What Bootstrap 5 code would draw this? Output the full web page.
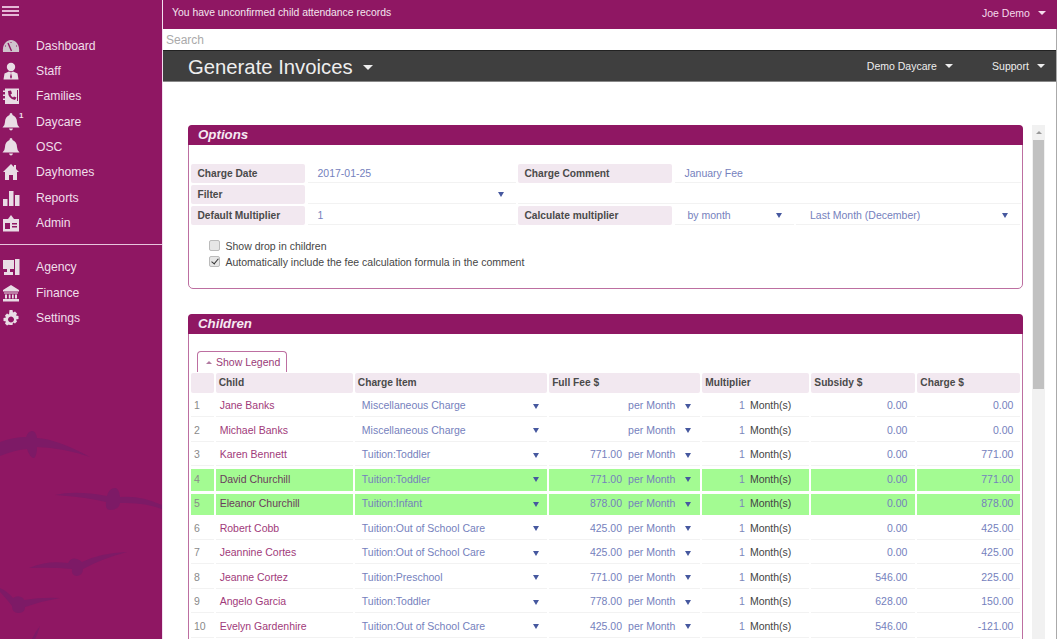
<!DOCTYPE html>
<html lang="en"><head><meta charset="utf-8"><title>Generate Invoices</title>
<link href="https://cdn.jsdelivr.net/npm/bootstrap@5.3.0/dist/css/bootstrap.min.css" rel="stylesheet">
<style>
html,body{height:639px;overflow:hidden;background:#fff;font-family:"Liberation Sans",Arial,sans-serif;font-size:10.5px;color:#444}
.shell{height:639px;width:1057px}
.side{width:163px;background:#8f1763;color:#f0dfea;flex:none;border-right:1px solid #f3dff0;position:relative;overflow:hidden}
.burger{height:29px;padding:6px 0 0 2px}
.burger i{display:block;width:17px;height:1.5px;background:#e5b8d6;margin-bottom:2.5px}
.navlist{padding-top:4px}
.navitem{height:25.35px;padding-left:2px;font-size:12.2px;position:relative}
.navitem svg{width:18px;height:18px;fill:#e9dde5;margin-right:16px;flex:none}
.sup{position:absolute;left:19px;top:1px;font-size:8px;font-weight:bold}
.sep{height:1px;background:#e8c5dd;margin:8.5px 0 9.5px}
.birds{position:absolute;left:0;bottom:0;width:162px;height:229px}
.wrap{flex:1;min-width:0;border-right:1px solid #aaa}
.topbar{height:29px;background:#8f1763;color:#f3e6ef;font-size:10.4px;padding:0 11px 0 9px;margin-right:-1px}
.noticetext{padding-top:5px}
.userlink{font-size:10.5px;padding-top:6px;color:#f5dcec}
.tri{display:inline-block;width:0;height:0;border-left:4px solid transparent;border-right:4px solid transparent;border-top:4px solid currentColor;vertical-align:2px}
.searchbar{height:21px;padding-left:3px;font-size:12px;color:#aaa;line-height:23px}
.titlebar{height:32px;background:#3f3f3f;border-top:1px solid #222;border-bottom:1px solid #888;color:#eee;padding:2px 11px 0 25px}
.pagetitle{font-size:20.3px;color:#eee;margin:0;font-weight:normal}
.pagetitle .tri{border-left-width:5px;border-right-width:5px;border-top-width:5px;margin-left:5px;vertical-align:4px}
.tlink{font-size:10.5px}
.gap9{margin-left:39px}
.scrollzone{flex:1;padding:43px 10px 0 25px;min-height:0;gap:9px}
.panels{width:835px;flex:none;gap:25px}
.pane{border:1px solid #bd6fa1;border-radius:5px;background:#fff;flex:none}
.panehead{height:20px;background:#8f1763;color:#f6e9f2;font-size:13.3px;font-weight:bold;font-style:italic;padding:0 10px;line-height:20px;border-radius:4px 4px 0 0;margin:-1px -1px 0}
.optbody{height:143px;padding:19px 2px 0}
.frow{height:21px;display:flex;gap:2.5px}
.lab{background:#f2e8f0;border-radius:2px;height:19px;line-height:19px;font-weight:bold;font-size:10.2px;color:#4a4a4a;padding-left:6.500px;flex:none}
.val{height:19px;line-height:19px;border-bottom:1px solid #f2f2f2;color:#7581bd;padding-left:10px;flex:none;position:relative}
.arr{position:absolute;top:7px;width:0;height:0;border-left:3px solid transparent;border-right:3px solid transparent;border-top:5px solid #46589f}
.w1{width:114px}.w2{width:208px}.w3{width:154px}.w4{width:346px}.w5{width:119px;padding-left:13px}.w6{width:224px;padding-left:14px}.w7{width:503px}
.checks{padding:12px 0 0 18px;color:#454545}
.chk{height:16px;gap:6px}
.chk input{appearance:none;width:10.5px;height:10.5px;margin:-3px 0 0;background:#e6e6e6;border:1px solid #bbb;border-radius:2px;position:relative}
.chk input:checked::after{content:"";position:absolute;left:3px;top:0;width:4px;height:7px;border:solid #333;border-width:0 1.5px 1.5px 0;transform:rotate(40deg)}
.kidsbody{padding:17px 2px 0;height:330px}
.legendtab{width:90px;height:21px;margin-left:6px;margin-bottom:1px;border:1px solid #bd6fa1;border-bottom:0;border-radius:4px 4px 0 0;color:#9a3a78;padding-left:8px;line-height:21px}
.legendtab .up{display:inline-block;width:0;height:0;border-left:3px solid transparent;border-right:3px solid transparent;border-bottom:3px solid #b27aa0;margin-right:4px;vertical-align:2px}
.kids{border-collapse:separate;border-spacing:2.4px 0;table-layout:fixed;width:833.4px;margin-left:-2px;color:#444}
.kids th{padding:0;border-bottom:2.5px solid #fff;height:22.5px}
.kids th div{height:20px;line-height:20px;padding:0 3px;background:#f2e8f0;border-radius:2px;font-weight:bold;font-size:10.2px;color:#4a4a4a}
.kids td{height:24.5px;padding:0 3px;border-bottom:3px solid #fff;box-shadow:inset 0 -1px 0 #f2f2f2;color:#7581bd;position:relative;vertical-align:middle;background:#fff}
.kids td.num{color:#8a8a8a}
.kids td.nm{color:#9f3a7a;padding-left:4px}
.kids td.itm{padding-left:7px}
.kids td.mult{color:#444;text-align:right;padding-right:18px}
.kids td.mult b{color:#7c86bb;font-weight:normal;margin-right:5px}
.kids td.amt{text-align:right;padding-right:7px}
.kids td.sub{padding-right:8px}
.kids td.fee{text-align:right;padding-right:25px}
.kids td.fee .per{margin-left:6px}
.kids tr.hit td{background:#a3fb92;box-shadow:none}
.kids tr.hit td.nm{color:#6b3a5c}
.kids .arr{top:8px}
.bar{width:13px;height:514px;background:#f1f1f1;flex:none;position:relative}
.bar i{display:block;width:11px;margin:0 1px;background:#c1c1c1;height:249px}
.barup{height:15px;display:flex;justify-content:center;padding-top:6px}
.barup u{display:block;width:0;height:0;border-left:3.5px solid transparent;border-right:3.5px solid transparent;border-bottom:3.5px solid #999}
</style></head><body>
<div class="shell d-flex">
<aside class="side d-flex flex-column">
<div class="burger"><i></i><i></i><i></i></div>
<div class="navlist">
<div class="navitem d-flex align-items-center"><svg viewBox="0 0 18 18"><path d="M1 15C0 8 4 3 9 3s9 5 8 12z" fill="#cfc3cc"/><path d="M9.500 14L6 6" stroke="#8f1763" stroke-width="1.400"/><path d="M3 9h1M14 9h1M9 5v1" stroke="#8f1763"/></svg>Dashboard</div>
<div class="navitem d-flex align-items-center"><svg viewBox="0 0 18 18"><circle cx="9" cy="5" r="4.200"/><path d="M1.500 17.500l1-6 4.500-2 2 1 2-1 4.500 2 1 6z"/><path d="M9 11l-1 4 1 2 1-2z" fill="#8f1763"/></svg>Staff</div>
<div class="navitem d-flex align-items-center"><svg viewBox="0 0 18 18"><path d="M3 1.500h14v15.500H3zM1 3.500h3v1.500H1zM1 7.500h3v1.500H1zM1 11.500h3v1.500H1z"/><path d="M6 4q0 8 7 9l1.500-2.500-2.500-1-1 1q-2-1-2.500-3l1.500-1-1-3zM15 3h1v11h-1z" fill="#8f1763"/></svg>Families</div>
<div class="navitem d-flex align-items-center"><svg viewBox="0 0 18 18"><path d="M9 0q1.500 0 1.500 2Q15 4 15 9q0 3 2.500 5.500H.5Q3 12 3 9q0-5 4.500-7Q7.500 0 9 0zM7 15.500h4q-.5 2-2 2t-2-2z"/></svg>Daycare<span class="sup">1</span></div>
<div class="navitem d-flex align-items-center"><svg viewBox="0 0 18 18"><path d="M9 0q1.500 0 1.500 2Q15 4 15 9q0 3 2.500 5.500H.5Q3 12 3 9q0-5 4.500-7Q7.500 0 9 0zM7 15.500h4q-.5 2-2 2t-2-2z"/></svg>OSC</div>
<div class="navitem d-flex align-items-center"><svg viewBox="0 0 18 18"><path d="M9 1L1 9h2v8h4v-5h4v5h4V9h2l-3-3V2h-2v2z"/></svg>Dayhomes</div>
<div class="navitem d-flex align-items-center"><svg viewBox="0 0 18 18"><path d="M1 10h4.500v7H1zM7 2h4.500v15H7zM13 6h4.500v11H13z"/></svg>Reports</div>
<div class="navitem d-flex align-items-center"><svg viewBox="0 0 18 18"><path d="M9 1l3 4h5v12.500H1V5h5z"/><path d="M3 9h5v6H3zM10 9h5v1.500h-5zM10 12h5v1.500h-5z" fill="#8f1763"/></svg>Admin</div>
</div>
<div class="sep"></div>
<div class="navitem d-flex align-items-center"><svg viewBox="0 0 18 18"><path d="M1 2h11v9H1zM13 1h4.500v16H13zM5 11h3v3h3v3H2v-3h3z"/></svg>Agency</div>
<div class="navitem d-flex align-items-center"><svg viewBox="0 0 18 18"><path d="M9 1l8 5v1.500H1V6zM2 8.500h14v1H2zM3 10.500h2v4H3zM6.800 10.500h1.700v4H6.800zM10 10.500h1.700v4H10zM13 10.500h2v4h-2zM1 15h16v2.500H1z"/></svg>Finance</div>
<div class="navitem d-flex align-items-center"><svg viewBox="0 0 18 18"><path fill-rule="evenodd" d="M7.500 1h3l.5 2.500 2-1 2 2-1 2 2.500.5v3l-2.500.5 1 2-2 2-2-1-.5 2.500h-3L7 15.500l-2 1-2-2 1-2L1.500 12V9L4 8.500 3 6.500l2-2 2 1zM9 7.500a3 3 0 1 0 .01 0z"/></svg>Settings</div>
<svg class="birds" viewBox="0 0 162 229" fill="#7d1a66"><path d="M0 32q14-5 26-5 2-6 6-6t5 7q20 1 53 19-26-9-53-10 0 9-3 11-4 0-7-9-12 1-27 7z"/><path d="M55 85q20-5 52 1 2-8 8-8 4 0 5 9 20-2 42 8v4q-18-7-42-6-1 7-10 7-5 0-4-8-20-5-51-7z"/><path d="M29 158q18-8 39-5 3-6 9-4 3 1 5 3 18-9 45-10-26 7-44 17 0 6-6 7-6 0-5-7-20-2-43-1z"/><path d="M0 178q7 3 13 10 4-3 8-1 3 1 3 3 18-3 36-2-18 3-35 9 0 6-7 6-6 0-6-7-7-9-12-14z"/><path d="M32 229q3-7 8-13-2 7-5 13z"/></svg>
</aside>
<div class="wrap d-flex flex-column">
<div class="topbar d-flex justify-content-between align-items-start"><span class="noticetext">You have unconfirmed child attendance records</span><span class="userlink">Joe Demo <span class="tri ms-2"></span></span></div>
<div class="searchbar">Search</div>
<div class="titlebar d-flex justify-content-between align-items-center">
<h1 class="pagetitle">Generate Invoices <span class="tri"></span></h1>
<div class="d-flex tlink"><span>Demo Daycare <span class="tri ms-2"></span></span><span class="gap9">Support <span class="tri ms-2"></span></span></div>
</div>
<div class="scrollzone d-flex">
<div class="panels d-flex flex-column">
<section class="card pane">
<div class="panehead">Options</div>
<div class="optbody">
<div class="frow"><div class="lab w1">Charge Date</div><div class="val w2">2017-01-25</div><div class="lab w3">Charge Comment</div><div class="val w4">January Fee</div></div>
<div class="frow"><div class="lab w1">Filter</div><div class="val w2"><span class="arr" style="left:190px"></span></div><div class="val w7"></div></div>
<div class="frow"><div class="lab w1">Default Multiplier</div><div class="val w2">1</div><div class="lab w3">Calculate multiplier</div><div class="val w5">by month<span class="arr" style="left:101px"></span></div><div class="val w6">Last Month (December)<span class="arr" style="left:206px"></span></div></div>
<div class="checks">
<div class="chk d-flex align-items-center"><input type="checkbox"><span>Show drop in children</span></div>
<div class="chk d-flex align-items-center"><input type="checkbox" checked><span>Automatically include the fee calculation formula in the comment</span></div>
</div>
</div>
</section>
<section class="card pane">
<div class="panehead">Children</div>
<div class="kidsbody">
<div class="legendtab"><span class="up"></span>Show Legend</div>
<table class="kids">
<colgroup><col style="width:22.6px"><col style="width:136.6px"><col style="width:191.6px"><col style="width:150.6px"><col style="width:106.6px"><col style="width:103.6px"><col style="width:102.6px"></colgroup>
<thead><tr><th><div></div></th><th><div>Child</div></th><th><div>Charge Item</div></th><th><div>Full Fee $</div></th><th><div>Multiplier</div></th><th><div>Subsidy $</div></th><th><div>Charge $</div></th></tr></thead>
<tbody>
<tr><td class="num">1</td><td class="nm">Jane Banks</td><td class="itm">Miscellaneous Charge<span class="arr" style="left:178.5px"></span></td><td class="fee"><span class="per">per Month</span><span class="arr" style="left:136px"></span></td><td class="mult"><b>1</b>Month(s)</td><td class="amt sub">0.00</td><td class="amt">0.00</td></tr>
<tr><td class="num">2</td><td class="nm">Michael Banks</td><td class="itm">Miscellaneous Charge<span class="arr" style="left:178.5px"></span></td><td class="fee"><span class="per">per Month</span><span class="arr" style="left:136px"></span></td><td class="mult"><b>1</b>Month(s)</td><td class="amt sub">0.00</td><td class="amt">0.00</td></tr>
<tr><td class="num">3</td><td class="nm">Karen Bennett</td><td class="itm">Tuition:Toddler<span class="arr" style="left:178.5px"></span></td><td class="fee">771.00<span class="per">per Month</span><span class="arr" style="left:136px"></span></td><td class="mult"><b>1</b>Month(s)</td><td class="amt sub">0.00</td><td class="amt">771.00</td></tr>
<tr class="hit"><td class="num">4</td><td class="nm">David Churchill</td><td class="itm">Tuition:Toddler<span class="arr" style="left:178.5px"></span></td><td class="fee">771.00<span class="per">per Month</span><span class="arr" style="left:136px"></span></td><td class="mult"><b>1</b>Month(s)</td><td class="amt sub">0.00</td><td class="amt">771.00</td></tr>
<tr class="hit"><td class="num">5</td><td class="nm">Eleanor Churchill</td><td class="itm">Tuition:Infant<span class="arr" style="left:178.5px"></span></td><td class="fee">878.00<span class="per">per Month</span><span class="arr" style="left:136px"></span></td><td class="mult"><b>1</b>Month(s)</td><td class="amt sub">0.00</td><td class="amt">878.00</td></tr>
<tr><td class="num">6</td><td class="nm">Robert Cobb</td><td class="itm">Tuition:Out of School Care<span class="arr" style="left:178.5px"></span></td><td class="fee">425.00<span class="per">per Month</span><span class="arr" style="left:136px"></span></td><td class="mult"><b>1</b>Month(s)</td><td class="amt sub">0.00</td><td class="amt">425.00</td></tr>
<tr><td class="num">7</td><td class="nm">Jeannine Cortes</td><td class="itm">Tuition:Out of School Care<span class="arr" style="left:178.5px"></span></td><td class="fee">425.00<span class="per">per Month</span><span class="arr" style="left:136px"></span></td><td class="mult"><b>1</b>Month(s)</td><td class="amt sub">0.00</td><td class="amt">425.00</td></tr>
<tr><td class="num">8</td><td class="nm">Jeanne Cortez</td><td class="itm">Tuition:Preschool<span class="arr" style="left:178.5px"></span></td><td class="fee">771.00<span class="per">per Month</span><span class="arr" style="left:136px"></span></td><td class="mult"><b>1</b>Month(s)</td><td class="amt sub">546.00</td><td class="amt">225.00</td></tr>
<tr><td class="num">9</td><td class="nm">Angelo Garcia</td><td class="itm">Tuition:Toddler<span class="arr" style="left:178.5px"></span></td><td class="fee">778.00<span class="per">per Month</span><span class="arr" style="left:136px"></span></td><td class="mult"><b>1</b>Month(s)</td><td class="amt sub">628.00</td><td class="amt">150.00</td></tr>
<tr><td class="num">10</td><td class="nm">Evelyn Gardenhire</td><td class="itm">Tuition:Out of School Care<span class="arr" style="left:178.5px"></span></td><td class="fee">425.00<span class="per">per Month</span><span class="arr" style="left:136px"></span></td><td class="mult"><b>1</b>Month(s)</td><td class="amt sub">546.00</td><td class="amt">-121.00</td></tr>
</tbody></table>
</div>
</section>
</div>
<div class="bar"><div class="barup"><u></u></div><i></i></div>
</div>
</div>
</div>
<script src="https://cdn.jsdelivr.net/npm/bootstrap@5.3.0/dist/js/bootstrap.bundle.min.js"></script>
</body></html>
